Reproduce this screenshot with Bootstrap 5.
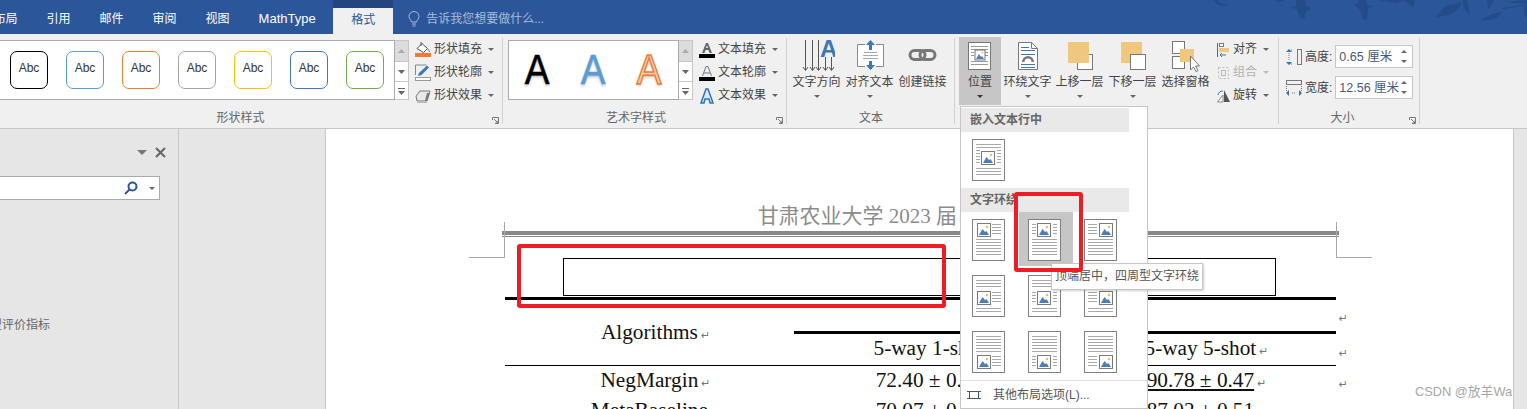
<!DOCTYPE html>
<html lang="zh">
<head>
<meta charset="UTF-8" />
<title>Word</title>
<link href="https://cdn.jsdelivr.net/npm/bootstrap@5.3.0/dist/css/bootstrap.min.css" rel="stylesheet" />
<style>
  html, body { height: 409px; overflow: hidden; }
  body { font-family: "Liberation Sans", "Noto Sans CJK SC", sans-serif; font-size: 12px; color: #444; background: #e6e6e6; position: relative; }
  .svgdefs { position: absolute; }

  /* title bar */
  .tabbar { height: 34px; background: #2b579a; color: #fff; position: relative; overflow: hidden; }
  .tabitem { padding: 0 14.5px; line-height: 38px; white-space: nowrap; flex: none; }
  .tabfirst { margin-left: -21px; }
  .tablatin { font-size: 13px; }
  .tabactive { margin-left: 3px; width: 60px; height: 34px; background: #f0f0f0; border-top: 8px solid #24467f; color: #2b579a; text-align: center; line-height: 24px; flex: none; }
  .tellme { margin-left: 15px; padding-top: 3px; color: #a9bcd8; gap: 6px; }
  .leaves { position: absolute; right: 0; top: 0; }

  /* ribbon */
  .ribbon { height: 95px; background: #f0f0f0; border-bottom: 1px solid #c6c6c6; }
  .rgroup { height: 94px; position: relative; flex: none; }
  .rgroup::after { content: ""; position: absolute; right: 0; top: 4px; bottom: 4px; width: 1px; background: #d0d0d0; }
  .grpshape { width: 503px; }
  .grpart { width: 284px; padding-left: 5px; }
  .grptext { width: 168px; padding-left: 3px; }
  .grparrange { width: 324px; }
  .grpsize { width: 141px; padding: 7px 0 0 7px; }
  .rlabel { position: absolute; left: 0; right: 0; top: 76px; text-align: center; line-height: 16px; color: #666; }
  .lblshape { right: 22px; }
  .lblart { right: 18px; }
  .lblsize { right: 14px; }
  .launch { position: absolute; right: 4px; bottom: 4px; }
  .gallery { background: #fff; border: 1px solid #ababab; height: 60px; margin-top: 6px; flex: none; }
  .galshape { width: 395px; border-left: 0; padding: 10px 0 0 10px; gap: 18px; }
  .galart { width: 171px; }
  .scrollcol { width: 14px; height: 60px; margin-top: 6px; border: 1px solid #c6c6c6; border-left: 0; background: #fff; flex: none; }
  .scrollcol > div { height: 20px; border-bottom: 1px solid #c6c6c6; display: flex; align-items: center; justify-content: center; }
  .scrollcol > div:first-child { background: #dcdcdc; height: 21px; }
  .scrollcol > div:last-child { border-bottom: 0; height: 18px; }
  .absc { width: 38px; height: 38px; border: 1px solid; border-radius: 7px; background: #fff; font-size: 12px; line-height: 33px; text-align: center; color: #333; flex: none; }
  .absblack { border-color: #000; }
  .absblue { border-color: #5b9bd5; }
  .absorange { border-color: #ed7d31; }
  .absgrey { border-color: #a5a5a5; }
  .absgold { border-color: #ffc000; }
  .absnavy { border-color: #4472c4; }
  .absgreen { border-color: #70ad47; }
  .artletter { font: 400 42px/57px "Liberation Sans", sans-serif; width: 56px; text-align: center; -webkit-text-stroke: .6px currentColor; text-shadow: 0 2px 3px rgba(0,0,0,.25); transform: scaleX(.88); }
  .artblack { color: #000; }
  .artblue { color: #5b9bd5; }
  .artpeach { color: #f8cbad; -webkit-text-stroke: 1.5px #ed7d31; }
  .cmdcol { margin-left: 5px; padding-top: 4px; flex: none; }
  .cmdcol1 { margin-left: 6px; }
  .cmdrow { height: 23px; line-height: 23px; white-space: nowrap; color: #444; gap: 3px; }
  .cmdoff { color: #b0b0b0; }
  .cmdrow svg { flex: none; }
  .caret7 { display: inline-block; width: 0; height: 0; border: 3px solid transparent; border-top: 3px solid #666; border-bottom: 0; margin-left: 3px; }
  .caretoff { border-top-color: #bbb; }
  .bigbtn { width: 53px; text-align: center; line-height: 15px; padding-top: 3px; white-space: nowrap; flex: none; }
  .bigbtn svg { display: block; margin: 0 auto; height: 38px; }
  .bigbtn span { display: block; }
  .bigbtn .caret7 { display: block; margin: 5px auto 0; }
  .posbtn { width: 42px; height: 68px; background: #c6c6c6; margin: 3px 1px 0 4px; padding-top: 0; }
  .posbtn .caret7 { border-top-color: #333; }
  .wrapbtn { width: 51px; }
  .sizerow { height: 31px; gap: 3px; }
  .sizerow span { padding-top: 1px; }
  .numbox { width: 78px; height: 23px; background: #fff; border: 1px solid #c6c6c6; font-size: 12.5px; color: #45597a; line-height: 22px; padding-left: 3px; position: relative; white-space: nowrap; flex: none; }
  .numbox i { position: absolute; right: 5px; width: 0; height: 0; border: 3px solid transparent; }
  .numbox i.up { top: 4px; border-top: 0; border-bottom: 3px solid #666; }
  .numbox i.dn { bottom: 4px; border-bottom: 0; border-top: 3px solid #666; }

  /* document area */
  .workarea { height: 280px; }
  .navpane { width: 179px; border-right: 1px solid #c6c6c6; flex: none; position: relative; overflow: hidden; }
  .navhead { height: 28px; padding: 18px 12px 0 0; gap: 8px; }
  .navcaret { border-width: 5px 5px 0; border-top-color: #777; margin: 0; }
  .navsearch { height: 24px; margin: 19px 18px 0 0; background: #fff; border: 1px solid #ababab; border-left: 0; }
  .navtext { margin: 117px 0 0 -22px; white-space: nowrap; color: #666; line-height: 16px; }
  .greygap { width: 147px; flex: none; border-right: 1px solid #c6c6c6; }
  .docpage { width: 1188px; flex: none; background: #fff; border-right: 1px solid #c6c6c6; position: relative; height: 280px; overflow: hidden; padding-left: 179px; }
  .headtext { width: 831px; text-align: center; font-family: "Liberation Serif", "Noto Sans CJK SC", serif; font-size: 21px; color: #8c8c8c; line-height: 24px; padding: 75px 0 0 5px; white-space: nowrap; }
  .headrule { width: 837px; margin: 3px 0 0 -3px; height: 6px; border-top: 4px solid #888; border-bottom: 1px solid #888; }
  .capbox { margin: 21px 0 1px 58px; width: 713px; height: 38px; border: 1px solid #000; }
  .papertable { width: 831px; border-top: 3px solid #000; font-family: "Liberation Serif", "Noto Sans CJK SC", serif; font-size: 21.3px; color: #111; table-layout: fixed; border-collapse: separate; border-spacing: 0; }
  .papertable td { padding: 0; text-align: center; vertical-align: middle; line-height: 24px; position: relative; white-space: nowrap; }
  .colalg { width: 289px; }
  .colshot { width: 271px; }
  .rowtop { height: 34px; }
  .rowmid { height: 31px; }
  .rowdata { height: 30px; }
  .papertable td.algcell { vertical-align: top; padding-top: 20px; }
  .papertable td.spancell { border-bottom: 3px solid #000; }
  .papertable td.thintop { border-top: 1px solid #000; padding-top: 2px; }
  .rowmid td, .rowlast td { padding-top: 1px; }
  .pmark { font: 11px/24px "DejaVu Sans", sans-serif; color: #777; margin-left: 3px; margin-right: -12px; }
  .rowend { position: absolute; right: -12px; top: 7px; margin: 0; }
  .rowend2 { top: 8px; }
  .cropmark { position: absolute; top: 93px; width: 36px; height: 36px; border: 0 solid #a8a8a8; }
  .cropleft { left: 143px; border-width: 0 1px 1px 0; }
  .cropright { left: 1010px; border-width: 0 0 1px 1px; }

  /* position dropdown */
  .posmenu { position: absolute; left: 960px; top: 106px; width: 188px; height: 303px; background: #fff; border: 1px solid #c6c6c6; padding: 1px 0; }
  .menuhead { width: 168px; height: 24px; background: #e9e9e9; font-weight: 700; color: #666; line-height: 24px; padding-left: 9px; }
  .pagegrid { display: grid; grid-template-columns: repeat(3, 56px); grid-auto-rows: 56px; padding-left: 2px; }
  .pagecell { padding: 7px 0 0 9px; }
  .pagecell svg { display: block; }
  .pagecell.hot { background: #c6c6c6; width: 54px; height: 54px; }
  .menusep { border-top: 1px solid #e1e1e1; }
  .menufoot { height: 28px; padding-left: 6px; color: #555; }
  .menufoot span { margin-left: 12px; }
  .tiptext { position: absolute; left: 1051px; top: 263px; width: 152px; height: 27px; background: #fff; border: 1px solid #c6c6c6; box-shadow: 1px 1px 2px rgba(0,0,0,.2); line-height: 25px; text-align: center; color: #555; white-space: nowrap; }
  .redbox { position: absolute; border: 4px solid #ee1c25; border-radius: 3px; }
  .redwide { left: 517px; top: 244px; width: 429px; height: 64px; }
  .rednarrow { left: 1014px; top: 192px; width: 69px; height: 80px; }
  .watermark { position: absolute; left: 1415px; top: 383px; font-size: 12.8px; line-height: 18px; color: #a6a6a6; white-space: nowrap; }
</style>
</head>
<body>
<svg width="0" height="0" class="svgdefs">
  <defs>
    <g id="pic">
      <rect x=".5" y=".5" width="13" height="13" fill="#fff" stroke="#7a7a7a"/>
      <path d="M2 12 5.500 6 8 9 9.500 8 12 12z" fill="#4a7ebb"/>
      <circle cx="10" cy="4" r="1.300" fill="#f0c060"/>
    </g>
    <rect id="pagebase" x=".5" y=".5" width="32" height="41" fill="#fff" stroke="#808080"/>
    <g id="launcher" fill="none" stroke="#777"><path d="M.5 3V.5H6.500V6.500H3M2 2l4 4M6 3.500V6H3.500"/></g>
    <path id="scrollup" d="M0 4 3.500 0 7 4z" fill="#aaa"/>
    <path id="scrolldn" d="M0 0h7L3.500 4z" fill="#666"/>
    <path id="scrollmore" d="M0 0h7v1H0zM0 3h7L3.500 7z" fill="#666"/>
  </defs>
</svg>

<!-- tabs -->
<div class="tabbar d-flex">
  <span class="tabitem tabfirst">布局</span>
  <span class="tabitem">引用</span>
  <span class="tabitem">邮件</span>
  <span class="tabitem">审阅</span>
  <span class="tabitem">视图</span>
  <span class="tabitem tablatin">MathType</span>
  <div class="tabactive">格式</div>
  <div class="tellme d-flex align-items-center">
    <svg width="12" height="16" viewBox="0 0 12 16" fill="none" stroke="#a9bcd8"><path d="M3.500 11C3 8.500 1 8 1 5.500a5 5 0 0 1 10 0C11 8 9 8.500 8.500 11zM4 13h4M4.500 15h3"/></svg>
    <span>告诉我您想要做什么...</span>
  </div>
  <svg class="leaves" width="337" height="34" viewBox="0 0 337 34" fill="#254c88">
    <path d="M23 0h5l2 3 8 2-7 1-4-2zM85 0h10l-6 2zM106 0h9l1 6 5 2-5 4-2 8-4-2-3-9-6-1 5-2zM168 0h8l1 5 6 1-5 3-1 11-4-1-3-9-6-6 4-1zM188 0h25l-7 3zM213 0h12l-2 8-4-4z"/>
    <path d="M245 17c5-2 6-10 14-12l13-3c-3 8-9 14-27 15zM273 0h4l3 15c-5-4-8-9-7-15zM297 0h7l-4 8-2 1zM290 20c5-1 9-7 22-8-3 6-9 9-22 8z"/>
    <path d="M312 8c8-1 15-2 25-4v1c-9 2-16 3-24 4zM314 2l23-2v4zM334 6h3v12l-3-5z"/>
  </svg>
</div>

<!-- ribbon -->
<div class="ribbon d-flex">
  <div class="rgroup grpshape d-flex">
    <div class="gallery galshape d-flex">
      <div class="absc absblack">Abc</div>
      <div class="absc absblue">Abc</div>
      <div class="absc absorange">Abc</div>
      <div class="absc absgrey">Abc</div>
      <div class="absc absgold">Abc</div>
      <div class="absc absnavy">Abc</div>
      <div class="absc absgreen">Abc</div>
    </div>
    <div class="scrollcol">
      <div><svg width="7" height="4"><use href="#scrollup"/></svg></div>
      <div><svg width="7" height="4"><use href="#scrolldn"/></svg></div>
      <div><svg width="7" height="7"><use href="#scrollmore"/></svg></div>
    </div>
    <div class="cmdcol cmdcol1">
      <div class="cmdrow d-flex align-items-center">
        <svg width="16" height="17" viewBox="0 0 16 17"><path d="M2 7.500 7 2.500l5.500 5-4 4z" fill="#fff" stroke="#555"/><path d="M6 1v4" stroke="#555"/><path d="M13 8c1 1.500 1.500 2 1.500 3" stroke="#888"/><rect y="12" width="16" height="4" fill="#ed7d31"/></svg>形状填充<span class="caret7"></span>
      </div>
      <div class="cmdrow d-flex align-items-center">
        <svg width="16" height="17" viewBox="0 0 16 17"><path d="M.5 11V1h11" fill="none" stroke="#888"/><path d="M4 9 12 1.500l2 2L6.500 11 3 12z" fill="#3a78b8"/><rect x=".5" y="13.500" width="15" height="3" fill="#fff" stroke="#999"/></svg>形状轮廓<span class="caret7"></span>
      </div>
      <div class="cmdrow d-flex align-items-center">
        <svg width="16" height="16" viewBox="0 0 16 16"><path d="M1 8 5 3h10l-3 10H2z" fill="#e8e8e8" stroke="#777"/><path d="M10 13 12 5h3l-3 8z" fill="#777"/><path d="M2 14h10" stroke="#bbb" stroke-width="2"/></svg>形状效果<span class="caret7"></span>
      </div>
    </div>
    <div class="rlabel lblshape">形状样式</div>
    <svg class="launch" width="7" height="7" viewBox="0 0 7 7"><use href="#launcher"/></svg>
  </div>

  <div class="rgroup grpart d-flex">
    <div class="gallery galart d-flex">
      <div class="artletter artblack">A</div>
      <div class="artletter artblue">A</div>
      <div class="artletter artpeach">A</div>
    </div>
    <div class="scrollcol">
      <div><svg width="7" height="4"><use href="#scrollup"/></svg></div>
      <div><svg width="7" height="4"><use href="#scrolldn"/></svg></div>
      <div><svg width="7" height="7"><use href="#scrollmore"/></svg></div>
    </div>
    <div class="cmdcol cmdcol1">
      <div class="cmdrow d-flex align-items-center"><svg width="16" height="16" viewBox="0 0 16 16"><path d="M3 11 7 1h2l4 10h-2.500L9.500 8h-3l-1 3zM7 6h2L8 3z" fill="#666"/><rect y="12" width="16" height="4" fill="#000"/></svg>文本填充<span class="caret7"></span></div>
      <div class="cmdrow d-flex align-items-center"><svg width="16" height="16" viewBox="0 0 16 16"><path d="M3.500 11 7 1.500h2L12.500 11M5 8h6" fill="none" stroke="#777"/><rect y="12" width="16" height="4" fill="#000"/></svg>文本轮廓<span class="caret7"></span></div>
      <div class="cmdrow d-flex align-items-center"><svg width="16" height="16" viewBox="0 0 16 16"><path d="M2 15 7 1h2l5 14h-3l-1-4H6l-1 4z" fill="#dbe8f4" stroke="#2e75b6" stroke-width="1.500"/></svg>文本效果<span class="caret7"></span></div>
    </div>
    <div class="rlabel lblart">艺术字样式</div>
    <svg class="launch" width="7" height="7" viewBox="0 0 7 7"><use href="#launcher"/></svg>
  </div>

  <div class="rgroup grptext d-flex">
    <div class="bigbtn"><svg width="36" height="38" viewBox="0 0 36 38" fill="none" stroke="#555"><path d="M6.500 3v30M13.500 3v30M19.500 3v30M26.500 20v13M32.500 20v13M4 30l2.500 3.500L9 30M11 30l2.500 3.500L16 30M17 30l2.500 3.500L22 30M24 30l2.500 3.500L29 30M30 30l2.500 3.500L35 30"/><text x="21" y="20" font-size="24" font-weight="700" font-family="Liberation Sans" fill="#3a78b8" stroke="none">A</text></svg><span>文字方向</span><i class="caret7"></i></div>
    <div class="bigbtn"><svg width="30" height="38" viewBox="0 0 30 38" fill="none"><path d="M10 7.500H2.500v22H10M21 7.500h7.500v22H21" fill="#fff" stroke="#888"/><rect x="3" y="8" width="25" height="21" fill="#fff"/><path d="M9 15.500h13M8 18.500h15M8 21.500h15" stroke="#aaa"/><path d="M15.500 6v7M15.500 24v8" stroke="#3a78b8" stroke-width="3"/><path d="M11 8l4.500-5L20 8zM11 28l4.500 5 4.500-5z" fill="#3a78b8"/></svg><span>对齐文本</span><i class="caret7"></i></div>
    <div class="bigbtn"><svg width="30" height="38" viewBox="0 0 30 38" fill="none" stroke="#777" stroke-width="3"><rect x="2" y="13.500" width="15" height="9" rx="4.500"/><rect x="12" y="13.500" width="15" height="9" rx="4.500"/></svg><span>创建链接</span></div>
    <div class="rlabel">文本</div>
  </div>

  <div class="rgroup grparrange d-flex">
    <div class="bigbtn posbtn"><svg width="24" height="38" viewBox="0 0 24 38"><rect x=".5" y="5.500" width="22" height="27" fill="#fff" stroke="#777"/><path d="M3 9.500h17M3 12.500h17M3 15.500h3M17 15.500h3M3 18.500h3M17 18.500h3M3 24.500h17M3 27.500h17" stroke="#999"/><rect x="7" y="13" width="10" height="10" fill="#fff" stroke="#777"/><path d="M8 22l3-5 2 3 1-1 2 3z" fill="#4a7ebb"/><circle cx="14.500" cy="15.500" r="1" fill="#f0c060"/></svg><span>位置</span><i class="caret7"></i></div>
    <div class="bigbtn wrapbtn"><svg width="22" height="38" viewBox="0 0 22 38" fill="none"><path d="M1.500 5.500h13l6 6v21h-19z" fill="#fff" stroke="#777"/><path d="M14.500 5.500v6h6" stroke="#777"/><path d="M4 10.500h8M4 13.500h14M4 17.500h14M4 27.500h14M4 30.500h14" stroke="#3a78b8"/><path d="M5 25a6 6 0 0 1 12 0h-2.500a3.500 3.500 0 0 0-7 0z" fill="#777"/></svg><span>环绕文字</span><i class="caret7"></i></div>
    <div class="bigbtn"><svg width="26" height="38" viewBox="0 0 26 38"><rect x="10.500" y="17.500" width="15" height="15" fill="#fff" stroke="#777"/><rect x="1" y="5" width="21" height="21" fill="#efc77e"/></svg><span>上移一层</span><i class="caret7"></i></div>
    <div class="bigbtn"><svg width="26" height="38" viewBox="0 0 26 38"><rect x="1" y="5" width="21" height="21" fill="#efc77e"/><rect x="10.500" y="17.500" width="15" height="15" fill="#fff" stroke="#777"/></svg><span>下移一层</span><i class="caret7"></i></div>
    <div class="bigbtn"><svg width="28" height="38" viewBox="0 0 28 38"><rect x=".5" y="4.500" width="12" height="12" fill="#fff" stroke="#777"/><rect x=".5" y="19.500" width="12" height="12" fill="#fff" stroke="#777"/><rect x="8" y="12" width="14" height="13" fill="#efc77e"/><path d="M18.500 19v14l3-3 2.500 4.500 2-1-2.500-4.500h4z" fill="#fff" stroke="#777"/></svg><span>选择窗格</span></div>
    <div class="cmdcol">
      <div class="cmdrow d-flex align-items-center"><svg width="13" height="16" viewBox="0 0 13 16" fill="none"><path d="M.5 1v14" stroke="#666"/><rect x="2.500" y="1.500" width="4" height="3" fill="#fff" stroke="#777"/><rect x="2" y="6" width="10" height="4" fill="#efc77e"/><path d="M9 13H3M5 11l-2 2 2 2" stroke="#3a78b8"/></svg>对齐<span class="caret7"></span></div>
      <div class="cmdrow cmdoff d-flex align-items-center"><svg width="13" height="16" viewBox="0 0 13 16" fill="none" stroke="#bbb"><rect x="1.500" y="2.500" width="10" height="11" stroke-dasharray="2 2"/><rect x="4.500" y="5.500" width="4" height="5"/></svg>组合<span class="caret7 caretoff"></span></div>
      <div class="cmdrow d-flex align-items-center"><svg width="13" height="16" viewBox="0 0 13 16"><path d="M.5 14 6 7v7z" fill="#fff" stroke="#888"/><path d="M7 2v12h6z" fill="#555"/><path d="M1 7a5 5 0 0 1 5-4" stroke="#3a78b8" fill="none"/></svg>旋转<span class="caret7"></span></div>
    </div>
  </div>

  <div class="rgroup grpsize">
    <div class="sizerow d-flex align-items-center">
      <svg width="16" height="16" viewBox="0 0 16 16" fill="none"><path d="M3 4v8" stroke="#777" stroke-dasharray="1 1"/><path d="M0 3l3-3 3 3zM0 13l3 3 3-3z" fill="#2e75b6"/><path d="M5 1h2M5 15h2" stroke="#777" stroke-dasharray="1 1"/><rect x="11.500" y=".5" width="4" height="15" stroke="#777"/></svg><span>高度:</span>
      <div class="numbox">0.65 厘米<i class="up"></i><i class="dn"></i></div>
    </div>
    <div class="sizerow d-flex align-items-center">
      <svg width="16" height="16" viewBox="0 0 16 16" fill="none"><rect x=".5" y=".5" width="15" height="4" stroke="#777"/><path d="M.5 6v5M15.500 6v5" stroke="#777" stroke-dasharray="1 1"/><path d="M3 10l-3 3 3 3zM13 10l3 3-3 3z" fill="#2e75b6"/><path d="M6 13h4" stroke="#777" stroke-dasharray="1 1"/></svg><span>宽度:</span>
      <div class="numbox">12.56 厘米<i class="up"></i><i class="dn"></i></div>
    </div>
    <div class="rlabel lblsize">大小</div>
    <svg class="launch" width="7" height="7" viewBox="0 0 7 7"><use href="#launcher"/></svg>
  </div>
</div>

<!-- navigation pane, grey margin, document page -->
<div class="workarea d-flex">
  <div class="navpane">
    <div class="navhead d-flex justify-content-end align-items-center">
      <span class="caret7 navcaret"></span>
      <svg width="11" height="11" viewBox="0 0 11 11" stroke="#666" stroke-width="2"><path d="M1 1l9 9M10 1l-9 9"/></svg>
    </div>
    <div class="navsearch d-flex justify-content-end align-items-center gap-2 pe-1">
      <svg width="14" height="14" viewBox="0 0 14 14" fill="none" stroke="#2b579a" stroke-width="2"><circle cx="8.500" cy="5.500" r="4"/><path d="M5.500 8.500 1 13"/></svg>
      <span class="caret7"></span>
    </div>
    <div class="navtext">模型评价指标</div>
  </div>
  <div class="greygap"></div>
  <div class="docpage">
    <div class="cropmark cropleft"></div>
    <div class="cropmark cropright"></div>
    <div class="headtext">甘肃农业大学 2023 届 本科毕业论文</div>
    <div class="headrule"></div>
    <div class="capbox"></div>
    <table class="papertable">
      <colgroup><col class="colalg"><col class="colshot"><col class="colshot"></colgroup>
      <tr class="rowtop">
        <td rowspan="2" class="algcell">Algorithms<span class="pmark">↵</span></td>
        <td colspan="2" class="spancell"><span class="rowend pmark">↵</span></td>
      </tr>
      <tr class="rowmid">
        <td>5-way 1-shot<span class="pmark">↵</span></td>
        <td>5-way 5-shot<span class="pmark">↵</span><span class="rowend rowend2 pmark">↵</span></td>
      </tr>
      <tr class="rowdata">
        <td class="thintop">NegMargin<span class="pmark">↵</span></td>
        <td class="thintop">72.40 ± 0.82<span class="pmark">↵</span></td>
        <td class="thintop"><u>90.78 ± 0.47</u><span class="pmark">↵</span><span class="rowend pmark">↵</span></td>
      </tr>
      <tr class="rowdata rowlast">
        <td>MetaBaseline<span class="pmark">↵</span></td>
        <td>70.07 ± 0.91<span class="pmark">↵</span></td>
        <td>87.02 ± 0.51<span class="pmark">↵</span></td>
      </tr>
    </table>
  </div>
</div>

<!-- position menu -->
<div class="posmenu">
  <div class="menuhead">嵌入文本行中</div>
  <div class="pagegrid"><div class="pagecell"><svg width="33" height="42" viewBox="0 0 33 42"><use href="#pagebase"/><path d="M4 5.500h25M4 8.500h25M4 11.500h4M25 11.500h4M4 14.500h4M25 14.500h4M4 17.500h4M25 17.500h4M4 20.500h4M25 20.500h4M4 23.500h4M25 23.500h4M4 29.500h25M4 32.500h25M4 35.500h25" stroke="#a8a8a8"/><use href="#pic" x="9" y="12"/></svg></div></div>
  <div class="menuhead">文字环绕</div>
  <div class="pagegrid">
    <div class="pagecell"><svg width="33" height="42" viewBox="0 0 33 42"><use href="#pagebase"/><path d="M20 5.500h9M20 8.500h9M20 11.500h9M20 14.500h9M4 20.500h25M4 23.500h25M4 26.500h25M4 29.500h25M4 32.500h25M4 35.500h25" stroke="#a8a8a8"/><use href="#pic" x="5" y="4"/></svg></div>
    <div class="pagecell hot"><svg width="33" height="42" viewBox="0 0 33 42"><use href="#pagebase"/><path d="M4 5.500h4M25 5.500h4M4 8.500h4M25 8.500h4M4 11.500h4M25 11.500h4M4 14.500h4M25 14.500h4M4 20.500h25M4 23.500h25M4 26.500h25M4 29.500h25M4 32.500h25M4 35.500h25" stroke="#a8a8a8"/><use href="#pic" x="9" y="4"/></svg></div>
    <div class="pagecell"><svg width="33" height="42" viewBox="0 0 33 42"><use href="#pagebase"/><path d="M4 5.500h9M4 8.500h9M4 11.500h9M4 14.500h9M4 20.500h25M4 23.500h25M4 26.500h25M4 29.500h25M4 32.500h25M4 35.500h25" stroke="#a8a8a8"/><use href="#pic" x="15" y="4"/></svg></div>
    <div class="pagecell"><svg width="33" height="42" viewBox="0 0 33 42"><use href="#pagebase"/><path d="M4 5.500h25M4 8.500h25M4 11.500h25M20 17.500h9M20 20.500h9M20 23.500h9M20 26.500h9M4 33.500h25M4 36.500h25" stroke="#a8a8a8"/><use href="#pic" x="5" y="16"/></svg></div>
    <div class="pagecell"><svg width="33" height="42" viewBox="0 0 33 42"><use href="#pagebase"/><path d="M4 5.500h25M4 8.500h25M4 11.500h25M4 17.500h4M25 17.500h4M4 20.500h4M25 20.500h4M4 23.500h4M25 23.500h4M4 26.500h4M25 26.500h4M4 33.500h25M4 36.500h25" stroke="#a8a8a8"/><use href="#pic" x="9" y="16"/></svg></div>
    <div class="pagecell"><svg width="33" height="42" viewBox="0 0 33 42"><use href="#pagebase"/><path d="M4 5.500h25M4 8.500h25M4 11.500h25M4 17.500h9M4 20.500h9M4 23.500h9M4 26.500h9M4 33.500h25M4 36.500h25" stroke="#a8a8a8"/><use href="#pic" x="15" y="16"/></svg></div>
    <div class="pagecell"><svg width="33" height="42" viewBox="0 0 33 42"><use href="#pagebase"/><path d="M4 5.500h25M4 8.500h25M4 11.500h25M4 14.500h25M4 17.500h25M4 20.500h25M20 25.500h9M20 28.500h9M20 31.500h9M20 34.500h9" stroke="#a8a8a8"/><use href="#pic" x="5" y="24"/></svg></div>
    <div class="pagecell"><svg width="33" height="42" viewBox="0 0 33 42"><use href="#pagebase"/><path d="M4 5.500h25M4 8.500h25M4 11.500h25M4 14.500h25M4 17.500h25M4 20.500h25M4 25.500h4M25 25.500h4M4 28.500h4M25 28.500h4M4 31.500h4M25 31.500h4M4 34.500h4M25 34.500h4" stroke="#a8a8a8"/><use href="#pic" x="9" y="24"/></svg></div>
    <div class="pagecell"><svg width="33" height="42" viewBox="0 0 33 42"><use href="#pagebase"/><path d="M4 5.500h25M4 8.500h25M4 11.500h25M4 14.500h25M4 17.500h25M4 20.500h25M4 25.500h9M4 28.500h9M4 31.500h9M4 34.500h9" stroke="#a8a8a8"/><use href="#pic" x="15" y="24"/></svg></div>
  </div>
  <div class="menusep"></div>
  <div class="menufoot d-flex align-items-center">
    <svg width="14" height="12" viewBox="0 0 14 12" fill="none" stroke="#555"><rect x="2.500" y="2.500" width="9" height="7" stroke="#2b579a"/><path d="M0 2.500h14M0 9.500h14"/></svg>
    <span>其他布局选项(L)...</span>
  </div>
</div>

<div class="tiptext">顶端居中，四周型文字环绕</div>
<div class="redbox redwide"></div>
<div class="redbox rednarrow"></div>
<div class="watermark">CSDN @放羊Wa</div>

<script src="https://cdn.jsdelivr.net/npm/bootstrap@5.3.0/dist/js/bootstrap.bundle.min.js"></script>
</body>
</html>
